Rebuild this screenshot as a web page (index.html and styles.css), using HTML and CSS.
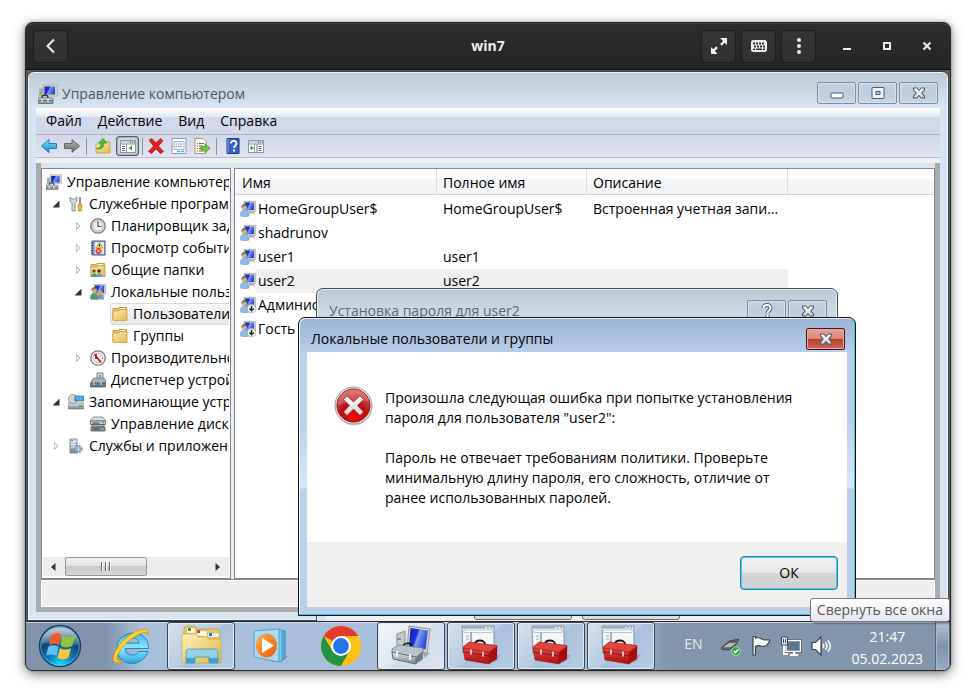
FILE: index.html
```html
<!DOCTYPE html>
<html lang="ru">
<head>
<meta charset="utf-8">
<title>win7</title>
<link rel="stylesheet" href="styles.css">
</head>
<body>
<svg class="defs" aria-hidden="true">
  <defs>
    <linearGradient id="g-screen" x1="0" y1="0" x2="1" y2="0.4"><stop offset="0" stop-color="#0a1eb4"/><stop offset="0.45" stop-color="#1a34d8"/><stop offset="0.55" stop-color="#7f9cf0"/><stop offset="1" stop-color="#2a48d8"/></linearGradient>
    <linearGradient id="g-folder" x1="0" y1="0" x2="1" y2="1"><stop offset="0" stop-color="#fdf0b4"/><stop offset="1" stop-color="#e3b54c"/></linearGradient>
    <linearGradient id="g-metal" x1="0" y1="0" x2="0" y2="1"><stop offset="0" stop-color="#e4e8ea"/><stop offset="1" stop-color="#78858c"/></linearGradient>
    <linearGradient id="g-blue" x1="0" y1="0" x2="0" y2="1"><stop offset="0" stop-color="#8fdcfb"/><stop offset="1" stop-color="#1687cf"/></linearGradient>
    <linearGradient id="g-grey" x1="0" y1="0" x2="0" y2="1"><stop offset="0" stop-color="#b4b4b4"/><stop offset="1" stop-color="#6c6c6c"/></linearGradient>
    <linearGradient id="g-red" x1="0" y1="0" x2="0" y2="1"><stop offset="0" stop-color="#e2433f"/><stop offset="1" stop-color="#a90e0e"/></linearGradient>
    <linearGradient id="g-cross" x1="0" y1="0" x2="0" y2="1"><stop offset="0" stop-color="#ffffff"/><stop offset="1" stop-color="#d3d3d3"/></linearGradient>
    <radialGradient id="g-error" cx="0.5" cy="0.85" r="0.9"><stop offset="0" stop-color="#f00a0a"/><stop offset="0.45" stop-color="#b90f12"/><stop offset="1" stop-color="#d8756f"/></radialGradient>
    <radialGradient id="g-orb" cx="0.5" cy="1" r="0.9"><stop offset="0" stop-color="#20e6ff"/><stop offset="0.35" stop-color="#0c86c0"/><stop offset="0.7" stop-color="#0d4677"/><stop offset="1" stop-color="#4c7196"/></radialGradient>
    <linearGradient id="g-gloss" x1="0" y1="0" x2="0" y2="1"><stop offset="0" stop-color="#fff" stop-opacity="0.65"/><stop offset="1" stop-color="#fff" stop-opacity="0.12"/></linearGradient>
    <linearGradient id="g-ie" x1="0" y1="0" x2="0" y2="1"><stop offset="0" stop-color="#3cb4ee"/><stop offset="0.5" stop-color="#8ee9ff"/><stop offset="1" stop-color="#2aa5e6"/></linearGradient>
    <linearGradient id="g-orange" x1="0" y1="0" x2="1" y2="1"><stop offset="0" stop-color="#ffac4c"/><stop offset="1" stop-color="#ea5a0c"/></linearGradient>

    <symbol id="i-comp" viewBox="0 0 20 20"><path d="M1 5l4-1v8l-4 1z" fill="#a8aeb2"/><path d="M2 8h2v2H2z" fill="#46d628"/><path d="M5 1h14.500v11H6z" fill="#d7d7cc" stroke="#9c9c92" stroke-width=".6"/><path d="M6.500 2.500h10.500v8h-10.500z" fill="url(#g-screen)"/><path d="M4 14c0-4 6-4 6 0" fill="none" stroke="#333" stroke-width="1.300"/><path d="M0 14h15v5.500H0z" fill="url(#g-metal)" stroke="#55636a" stroke-width=".7"/><path d="M0 16.500h15" stroke="#55636a"/><path d="M4 15v3M10 15v3" stroke="#eee" stroke-width="1.300"/></symbol>
    <symbol id="i-user" viewBox="0 0 16 16"><path d="M4 .5h11.500v9.500L12 11 5 9z" fill="#cfd1c8" stroke="#9a9c94" stroke-width=".6"/><path d="M5 1.500h9v7.500H5z" fill="url(#g-screen)"/><path d="M9 10h4l2 2.500H9z" fill="#b5b9b6"/><path d="M0.500 15c-.5-5 2-6 4-6s5 1 4.500 6c-2 .9-6 .9-8.500 0z" fill="#8dbde6" stroke="#6b9cc8" stroke-width=".6"/><circle cx="4.300" cy="6.500" r="2.600" fill="#d9b08d"/><path d="M1.600 7c-1-5 5-5 5.500-1.500C5 5 3 5 1.600 7z" fill="#8a6e55"/></symbol>
    <symbol id="i-off" viewBox="0 0 16 16"><use href="#i-user" width="16" height="16"/><circle cx="11.500" cy="11.500" r="4.300" fill="#f6f6f6" stroke="#888" stroke-width=".6"/><path d="M11.500 8.700v5M9.300 11.600l2.200 2.200 2.200-2.200" fill="none" stroke="#222" stroke-width="1.400"/></symbol>
    <symbol id="i-users" viewBox="0 0 16 16"><use href="#i-user" width="16" height="16"/><circle cx="10" cy="8.500" r="2.500" fill="#d9a15e"/><path d="M6 15.500c0-4 2-5 4-5s4 1 4 5z" fill="#7d97ae"/><path d="M.5 15c0-4 1-5.500 3.500-5.500S8 11 8 15z" fill="#4f9c57"/></symbol>
    <symbol id="i-tools" viewBox="0 0 16 16"><path d="M2 1v4l2 1.500V15h3V6.500L9 5V1L7 3H4z" fill="#d9dbdb" stroke="#717678" stroke-width=".8"/><path d="M12 1v7" stroke="#777" stroke-width="1.600"/><path d="M10.500 8h3l.5 2-.7 5h-2.600L10 10z" fill="#f4b52c" stroke="#b77a0c" stroke-width=".6"/></symbol>
    <symbol id="i-clock" viewBox="0 0 16 16"><circle cx="8" cy="8" r="7.200" fill="#e3ddd0" stroke="#77797c" stroke-width="1.300"/><circle cx="8" cy="8" r="5" fill="#eef5fa" stroke="#c6b488" stroke-width=".8"/><path d="M8 3.500V8.500h3.500" fill="none" stroke="#3a5374" stroke-width="1.200"/></symbol>
    <symbol id="i-event" viewBox="0 0 16 16"><path d="M2 1h13v14H2z" fill="#9eb3d2" stroke="#3c5384"/><path d="M5 2h9v12H5z" fill="#dde6f3"/><path d="M1 3h3M1 5.500h3M1 8h3M1 10.500h3M1 13h3" stroke="#555" stroke-width="1.200"/><path d="M9.500 2l3.500 6H6z" fill="#f6d32d" stroke="#a78a11" stroke-width=".5"/><path d="M9.500 4v2.500" stroke="#222"/><circle cx="8.500" cy="11" r="3" fill="#e03428"/><path d="M7 9.500l3 3m0-3l-3 3" stroke="#fff" stroke-width=".9"/></symbol>
    <symbol id="i-folder" viewBox="0 0 16 16"><path d="M1 2.500h5l1-1h7.500v12H1z" fill="#e7c161" stroke="#b98b2c" stroke-width=".8"/><path d="M1 5h6l1.500-1.500h6.500v11H1z" fill="url(#g-folder)" stroke="#c69a3c" stroke-width=".8"/><path d="M8 2.500h5" stroke="#fff"/></symbol>
    <symbol id="i-shared" viewBox="0 0 16 16"><use href="#i-folder" width="16" height="16"/><circle cx="4" cy="9" r="1.800" fill="#7b5136"/><circle cx="9" cy="9" r="1.800" fill="#3d3a33"/><path d="M1 15c0-5 6-5 6 0z" fill="#4aa370"/><path d="M6.500 15c0-5 6-5 6 0z" fill="#5fa8c5"/></symbol>
    <symbol id="i-perf" viewBox="0 0 16 16"><circle cx="8" cy="8" r="7.200" fill="#fafafa" stroke="#7a7d80" stroke-width="1.300"/><circle cx="8" cy="8" r="4.800" fill="#fff" stroke="#d46460" stroke-width="1" stroke-dasharray="1 1"/><path d="M4.500 4l6.500 8.500M6 4v5" stroke="#cf1c1c" stroke-width="1.800"/></symbol>
    <symbol id="i-device" viewBox="0 0 16 16"><path d="M7 1h6v7H7z" fill="#d5dcdc" stroke="#667577" stroke-width=".8"/><path d="M10 3v2" stroke="#1ba026" stroke-width="1.500"/><path d="M2 8l2-2h10l1.500 2v3H1z" fill="#a4b2ba" stroke="#596a72" stroke-width=".7"/><path d="M.5 11h15v4H.5z" fill="#667c88" stroke="#465761" stroke-width=".7"/><path d="M4 10v3M11 10v3" stroke="#e9eeee"/></symbol>
    <symbol id="i-storage" viewBox="0 0 16 16"><path d="M0 9h16v6H0z" fill="url(#g-metal)" stroke="#7a7f80" stroke-width=".7"/><circle cx="5" cy="5" r="4.500" fill="#d6dada" stroke="#80898b" stroke-width=".8"/><circle cx="5" cy="5" r="1.200" fill="#fff" stroke="#888" stroke-width=".6"/><path d="M7 2h8.500v5H7z" fill="#45b2e4" stroke="#1b6f9e" stroke-width=".7"/><path d="M11 12h3" stroke="#38b522" stroke-width="1.600"/></symbol>
    <symbol id="i-disk" viewBox="0 0 16 16"><path d="M3 1h10l2.500 4H.5z" fill="#dcdedd" stroke="#777c7c" stroke-width=".8"/><path d="M.5 5h15v3.500H.5zM2 8.500h12V11H2zM1 11h14v4H1z" fill="url(#g-metal)" stroke="#50595c" stroke-width=".8"/><path d="M2.500 7h7M3 13h7" stroke="#353b3d" stroke-width="1.200"/><path d="M12 6.500h2" stroke="#38b522" stroke-width="1.200"/></symbol>
    <symbol id="i-services" viewBox="0 0 16 16"><path d="M2 1h7v14H2z" fill="url(#g-metal)" stroke="#6c7980" stroke-width=".8"/><path d="M3 4h5M3 6.500h5M3 9h5" stroke="#eef" stroke-width="1"/><path d="M3 2.500h2" stroke="#35b72e" stroke-width="1.200"/><circle cx="10.500" cy="11" r="3" fill="#d2e4f1" stroke="#6691b4" stroke-width="2.200" stroke-dasharray="1.600 .8"/><circle cx="10.500" cy="11" r="1.200" fill="#fff" stroke="#47708f" stroke-width=".5"/></symbol>
    <symbol id="i-console" viewBox="0 0 16 16"><path d="M.5 2.500h15v12H.5z" fill="#fff" stroke="#8b93a0"/><path d="M1 3h14v2.500H1z" fill="#ccd5e2"/><path d="M10 4.200h1M12 4.200h1M14 4.200h.6" stroke="#46536a"/><path d="M1 6h14M6.500 6v8" stroke="#76818f" stroke-width=".8"/></symbol>
    <symbol id="i-x" viewBox="0 0 14 12"><path d="M1.500 1h3.200L7 3.500 9.300 1h3.200v1.800L9.800 6l2.700 3.200V11H9.300L7 8.500 4.700 11H1.500V9.200L4.200 6 1.500 2.800z" fill="url(#g-cross)" stroke="#4f566b" stroke-width="1.100" stroke-linejoin="round"/></symbol>
    <symbol id="i-toolbox" viewBox="0 0 40 40"><path d="M1 1h32v27H2z" fill="#f4f6f8" stroke="#8392a4"/><path d="M1.500 1.500h31v2h-31z" fill="#93a5b8"/><path d="M24 2.500h2M27.500 2.500h2M31 2.500h1" stroke="#fff"/><path d="M3 5h28v2.500H3z" fill="#fff" stroke="#8ea2ba" stroke-width=".6"/><path d="M10 7.500V18" stroke="#4a6790"/><path d="M5 11h3M5 14h3" stroke="#98a4b2"/><path d="M34 29l6 1-4 5-4 3z" fill="#788aa0" opacity=".5"/><path d="M14 19.500c0-5.500 10-5 10-.5" fill="none" stroke="#1b1010" stroke-width="1.800"/><path d="M2 22l6-5 28 3.500v6l-7 3L3 27z" fill="#e0453c" stroke="#a01414" stroke-width=".6"/><path d="M2 23l26 4v12L4 35z" fill="url(#g-red)" stroke="#8b1010" stroke-width=".5"/><path d="M28 27l8-6v13l-8 5z" fill="#a80f0f"/><path d="M2 27l26 4 8-5" fill="none" stroke="#7f0b0b" stroke-width=".8"/><path d="M10 24.500v5M22 26.500v5" stroke="#d8c0b8" stroke-width="2"/></symbol>
  </defs>
</svg>

<div class="viewer">
  <header class="viewer-bar">
    <button class="vbtn" aria-label="Назад"><svg width="16" height="16" viewBox="0 0 16 16"><path d="M11 1.500L4.500 8l6.500 6.500" fill="none" stroke="#eee" stroke-width="2"/></svg></button>
    <h1>win7</h1>
    <div class="viewer-tools">
      <button class="vbtn" aria-label="Во весь экран"><svg width="18" height="18" viewBox="0 0 18 18"><path d="M10 1h7v7l-2.300-2.300-3 3-1.600-1.600 3-3zM1 10l2.300 2.300 3-3 1.600 1.600-3 3L7.500 17H1z" fill="#eee"/></svg></button>
      <button class="vbtn" aria-label="Клавиатура"><svg width="18" height="14" viewBox="0 0 18 14"><rect x="1" y="1" width="16" height="12" rx="2.500" fill="#eee"/><path d="M3 4.500h12M4 7.500h11" stroke="#303030" stroke-width="1.800" stroke-dasharray="2 1"/><path d="M3 10.200h2m1 0h6m1 0h2" stroke="#303030" stroke-width="1.400"/></svg></button>
      <button class="vbtn" aria-label="Меню"><svg width="16" height="18" viewBox="0 0 16 18"><g fill="#eee"><circle cx="8" cy="3" r="2"/><circle cx="8" cy="9" r="2"/><circle cx="8" cy="15" r="2"/></g></svg></button>
      <div class="wm">
        <button aria-label="Свернуть"><svg width="16" height="16" viewBox="0 0 16 16"><path d="M4 11h8" stroke="#eee" stroke-width="2"/></svg></button>
        <button aria-label="Развернуть"><svg width="16" height="16" viewBox="0 0 16 16"><path d="M5 5h6v6H5z" fill="none" stroke="#eee" stroke-width="2"/></svg></button>
        <button aria-label="Закрыть"><svg width="16" height="16" viewBox="0 0 16 16"><path d="M4.500 4.500l7 7m0-7l-7 7" stroke="#eee" stroke-width="2"/></svg></button>
      </div>
    </div>
  </header>

  <main class="desktop">
    <section class="mgmt">
      <div class="titlebar">
        <svg class="i20"><use href="#i-comp"/></svg>
        <h2>Управление компьютером</h2>
        <div class="caption">
          <button aria-label="Свернуть окно"><svg width="14" height="12" viewBox="0 0 14 12"><rect x="1" y="6" width="12" height="5" rx="1" fill="#fff" stroke="#4f566b"/></svg></button>
          <button aria-label="Развернуть окно"><svg width="14" height="12" viewBox="0 0 14 12"><rect x="1" y=".5" width="12" height="11" rx="1" fill="#f4f4f4" stroke="#4f566b"/><rect x="5" y="4.500" width="4" height="3" fill="#b5c8dd" stroke="#4f566b"/></svg></button>
          <button aria-label="Закрыть окно"><svg width="14" height="12"><use href="#i-x"/></svg></button>
        </div>
      </div>
      <div class="client">
        <nav class="menubar"><button>Файл</button><button>Действие</button><button>Вид</button><button>Справка</button></nav>
        <div class="toolbar">
          <button aria-label="Назад"><svg class="i16" viewBox="0 0 16 16"><path d="M8 1.500v4h7.500v5H8v4L.5 8z" fill="url(#g-blue)" stroke="#1c6fb0" stroke-width=".9"/></svg></button>
          <button aria-label="Вперёд"><svg class="i16" viewBox="0 0 16 16"><path d="M8 1.500v4H.5v5H8v4L15.500 8z" fill="url(#g-grey)" stroke="#5e5e5e" stroke-width=".9"/></svg></button>
          <i class="sep"></i>
          <button aria-label="Вверх"><svg class="i16" viewBox="0 0 16 16"><path d="M1 6h6l2-2h6v11H1z" fill="url(#g-folder)" stroke="#c69a3c" stroke-width=".8"/><path d="M2 10c4 0 4-2 4-5H3.500L8 .5 12 5H9c0 4-2 6-7 6z" fill="#4ec22e" stroke="#27841a" stroke-width=".6"/></svg></button>
          <button class="pressed" aria-label="Дерево консоли"><svg class="i16" viewBox="0 0 16 16"><use href="#i-console"/><path d="M2 8.500h3M2 10.500h3M2 12.500h3" stroke="#3e68a8"/><path d="M12 7.500v5L8.500 10z" fill="#2fa82a"/></svg></button>
          <i class="sep"></i>
          <button aria-label="Удалить"><svg class="i16" viewBox="0 0 16 16"><path d="M1 2l3-1.500L8 5l4.500-4.500L15 2.500 10.500 8l5 5.500-3 2L8 11l-4.500 4.500L.5 13.500 5.500 8z" fill="#e3221f" stroke="#a50d0d" stroke-width=".7"/></svg></button>
          <button aria-label="Свойства"><svg class="i16" viewBox="0 0 16 16"><path d="M1 .5h14v15H1z" fill="#fff" stroke="#8c98ab"/><path d="M3 3.500h10v8H3z" fill="#f2f6fa" stroke="#8da3be" stroke-width=".8"/><path d="M4.500 6h1.500M7 6h4M4.500 8.500h1.500M7 8.500h4" stroke="#8296b0" stroke-width=".8"/><path d="M6 13.500h3M10 13.500h3" stroke="#34b6e8" stroke-width="1.500"/></svg></button>
          <button aria-label="Экспорт списка"><svg class="i16" viewBox="0 0 16 16"><path d="M1 .5h8l3 3v12H1z" fill="#fffbe6" stroke="#a49c78"/><path d="M3 5.500h1M5 5.500h5M3 8h1M5 8h4M3 10.500h1M5 10.500h2M3 13h1M5 13h5" stroke="#5b6b8c"/><path d="M7 8.500h4V6l5 4.200-5 4.300V12H7z" fill="#6ccd38" stroke="#36921a" stroke-width=".7"/></svg></button>
          <i class="sep"></i>
          <button aria-label="Справка"><svg class="i16" viewBox="0 0 16 16"><path d="M2 .5h12v15H2z" fill="#3a5fc4" stroke="#1c3585"/><path d="M3 1v14" stroke="#8ea8ea"/><path d="M6 5.500c0-3.500 5.500-3.500 5.500 0 0 2-2.500 2.200-2.500 4.500M9 11.500v2" fill="none" stroke="#fff" stroke-width="1.800"/></svg></button>
          <button aria-label="Панель действий"><svg class="i16" viewBox="0 0 16 16"><use href="#i-console"/><path d="M2.500 7.500v5L6 10z" fill="#2fa82a"/><path d="M9 6v8" stroke="#76818f"/><path d="M10.500 8.500h3M10.500 10.500h3M10.500 12.500h3" stroke="#3e68a8"/></svg></button>
        </div>
        <div class="frame">
          <div class="panes">
            <div class="tree">
              <ul>
                <li class="d0"><svg class="i16"><use href="#i-comp"/></svg>Управление компьютером</li>
                <li class="d1"><i class="tw open"></i><svg class="i16"><use href="#i-tools"/></svg>Служебные программы</li>
                <li class="d2"><i class="tw"></i><svg class="i16"><use href="#i-clock"/></svg>Планировщик заданий</li>
                <li class="d2"><i class="tw"></i><svg class="i16"><use href="#i-event"/></svg>Просмотр событий</li>
                <li class="d2"><i class="tw"></i><svg class="i16"><use href="#i-shared"/></svg>Общие папки</li>
                <li class="d2"><i class="tw open"></i><svg class="i16"><use href="#i-users"/></svg>Локальные пользователи</li>
                <li class="d3 sel"><svg class="i16"><use href="#i-folder"/></svg>Пользователи</li>
                <li class="d3"><svg class="i16"><use href="#i-folder"/></svg>Группы</li>
                <li class="d2"><i class="tw"></i><svg class="i16"><use href="#i-perf"/></svg>Производительность</li>
                <li class="d2"><i class="tw none"></i><svg class="i16"><use href="#i-device"/></svg>Диспетчер устройств</li>
                <li class="d1"><i class="tw open"></i><svg class="i16"><use href="#i-storage"/></svg>Запоминающие устройства</li>
                <li class="d2"><i class="tw none"></i><svg class="i16"><use href="#i-disk"/></svg>Управление дисками</li>
                <li class="d1"><i class="tw"></i><svg class="i16"><use href="#i-services"/></svg>Службы и приложения</li>
              </ul>
              <div class="hscroll">
                <svg width="6" height="10" viewBox="0 0 6 10"><path d="M5.500 1v8L1 5z" fill="#333"/></svg>
                <span class="thumb"><i></i><i></i><i></i></span>
                <svg width="6" height="10" viewBox="0 0 6 10"><path d="M.5 1v8L5 5z" fill="#333"/></svg>
              </div>
            </div>
            <div class="list">
              <table>
                <colgroup><col class="c1"><col class="c2"><col class="c3"><col></colgroup>
                <thead><tr><th>Имя</th><th>Полное имя</th><th>Описание</th><th class="rest"></th></tr></thead>
                <tbody>
                  <tr><td><span><svg class="i16"><use href="#i-user"/></svg>HomeGroupUser$</span></td><td>HomeGroupUser$</td><td>Встроенная учетная запи...</td><td></td></tr>
                  <tr><td><span><svg class="i16"><use href="#i-user"/></svg>shadrunov</span></td><td></td><td></td><td></td></tr>
                  <tr><td><span><svg class="i16"><use href="#i-user"/></svg>user1</span></td><td>user1</td><td></td><td></td></tr>
                  <tr class="sel"><td><span><svg class="i16"><use href="#i-user"/></svg>user2</span></td><td>user2</td><td></td><td></td></tr>
                  <tr><td><span><svg class="i16"><use href="#i-off"/></svg>Администратор</span></td><td></td><td></td><td></td></tr>
                  <tr><td><span><svg class="i16"><use href="#i-off"/></svg>Гость</span></td><td></td><td></td><td></td></tr>
                </tbody>
              </table>
            </div>
          </div>
          <div class="status"></div>
        </div>
      </div>
    </section>

    <section class="pw">
      <div class="titlebar">
        <h2>Установка пароля для user2</h2>
        <div class="caption">
          <button aria-label="Справка по окну"><svg width="14" height="16" viewBox="0 0 14 16"><path d="M3.500 5c0-4 7-4 7 0 0 2.500-3 2.500-3 5.500M7.500 12v2.500" fill="none" stroke="#4f566b" stroke-width="4"/><path d="M3.500 5c0-4 7-4 7 0 0 2.500-3 2.500-3 5.500M7.500 12v2.500" fill="none" stroke="#fff" stroke-width="2"/></svg></button>
          <button aria-label="Закрыть ввод пароля"><svg width="14" height="12"><use href="#i-x"/></svg></button>
        </div>
      </div>
      <div class="pw-body"><button aria-label="ОК"></button><button aria-label="Отмена"></button></div>
    </section>

    <section class="alert" role="alertdialog" aria-labelledby="alert-title">
      <div class="titlebar">
        <h2 id="alert-title">Локальные пользователи и группы</h2>
        <div class="caption"><button class="close" aria-label="Закрыть сообщение"><svg width="14" height="12"><use href="#i-x"/></svg></button></div>
      </div>
      <div class="alert-client">
        <div class="message">
          <svg class="err" width="40" height="40" viewBox="0 0 40 40"><ellipse cx="20" cy="22" rx="18" ry="17.500" fill="#999" opacity=".45"/><circle cx="19.500" cy="19.500" r="18.500" fill="#e9e9e9" stroke="#9a9a9a"/><circle cx="19.500" cy="19.500" r="16.500" fill="url(#g-error)" stroke="#8e1010"/><path d="M3.500 20C3 8 12 3 19.500 3S35 8 35.500 15C27 15 14 15 3.500 20z" fill="#fff" opacity=".16"/><path d="M13 10l6.500 6 6.500-6 3.500 3.500-6 6 6 6.500-3.500 3.500-6.500-6.500-6.500 6.500L9.500 26l6-6.500-6-6z" fill="url(#g-cross)" stroke="#9b1c1c" stroke-width=".6"/></svg>
          <div class="text">
            <p>Произошла следующая ошибка при попытке установления<br>пароля для пользователя "user2":</p>
            <p>Пароль не отвечает требованиям политики. Проверьте<br>минимальную длину пароля, его сложность, отличие от<br>ранее использованных паролей.</p>
          </div>
        </div>
        <div class="actions"><button class="ok">ОК</button></div>
      </div>
    </section>

    <footer class="taskbar">
      <button class="start" aria-label="Пуск"><svg width="44" height="44" viewBox="0 0 44 44"><circle cx="22" cy="22" r="20.500" fill="url(#g-orb)" stroke="#123f66" stroke-width="1.500"/><circle cx="22" cy="22" r="19.300" fill="none" stroke="#9fd4ef" stroke-opacity=".55"/><path d="M3.500 20C4 9 13 3.500 22 3.500S40 9 40.500 20C30 26 14 15 3.500 20z" fill="url(#g-gloss)"/><path d="M13.500 11.500c3-3 6-3 9.500-1L21 21c-3-2-6.500-2-10 0z" fill="#ef5c26"/><path d="M24.500 11.500c3 2 7.500 2.200 13 .5l-3.500 10c-4 2-8 2-11.500-.5z" fill="#8cc63e"/><path d="M10.500 22.500c3-1.800 7-1.600 10 .3L18.500 32c-3-2-6.500-2-10.500-.5z" fill="#62bdf2"/><path d="M22 24c3 2 7 2 11 .3L30.500 33.500c-3.500 2.500-8 2.500-11 .3z" fill="#fcc63c"/></svg></button>
      <button class="task plain" aria-label="Internet Explorer"><svg width="40" height="40" viewBox="0 0 40 40"><path d="M37.500 22.500H14c.3 7 11 9 13.500 3H37C32 42 6 42 6 22 6 3 38 1 37.500 22.500zM14.500 17H28c-.5-7-12.500-7-13.500 0z" fill="url(#g-ie)" stroke="#1d7bbd" stroke-width=".9" fill-rule="evenodd"/><path d="M37 9c3-10-12-6-22 3C5 21-1 33 4 36c2 1.300 5 .5 9-2-4 1-7 1-7-2 0-4 6-13 13-18C26 8.500 37 3 37 9z" fill="#fcd12c" stroke="#cf8d07" stroke-width=".7"/></svg></button>
      <button class="task open" aria-label="Проводник"><svg width="42" height="40" viewBox="0 0 42 40"><path d="M4 3l2-2h9l2 3h21l2 3v28H4z" fill="#e8ca62" stroke="#bd9a36" stroke-width=".7"/><path d="M7 3h8v5H7zM17 6h10v5H17zM28 8h11v4H28z" fill="#fff" stroke="#c3a54d" stroke-width=".4"/><path d="M8 3h3v3H8z" fill="#24a34a"/><path d="M17 5h3v3h-3z" fill="#df3a2d"/><path d="M29 8h3v3h-3z" fill="#2f76d8"/><path d="M2 9h14l2 3h8l2 2h13v24H2z" fill="url(#g-folder)" stroke="#cda644" stroke-width=".7"/><path d="M10 12v22M4 18l13 10M2 24h18M4 31l13-11" stroke="#fff" stroke-opacity=".35"/><path d="M6 38V27c0-2 1-3 3-3h26c2 0 3 1 3 3v11h-9v-6H15v6z" fill="#8bd3ee" stroke="#3b8fbe" stroke-width=".8" fill-opacity=".9"/><path d="M6 38v-5h9v5zM29 38v-5h9v5z" fill="#3f9fd6"/></svg></button>
      <button class="task plain" aria-label="Проигрыватель"><svg width="38" height="38" viewBox="0 0 38 38"><path d="M30 30l7-1-8 6-6-1z" fill="#6d8099" opacity=".5"/><path d="M22 3l11 1v27l-7 4z" fill="#59aedb" stroke="#3c8dbd"/><path d="M20 3h10v31H20z" fill="#83cbeb" stroke="#4797c5"/><path d="M2 4l25-2v33L2 30z" fill="#a8dcf2" stroke="#539fcb"/><ellipse cx="14.500" cy="18.500" rx="10.500" ry="12" fill="url(#g-orange)"/><path d="M10 11v15l12-7.500z" fill="#fff"/></svg></button>
      <button class="task plain" aria-label="Chrome"><svg width="40" height="40" viewBox="0 0 40 40"><circle cx="20" cy="20" r="20" fill="#fbc116"/><path d="M20 20L2.700 10A20 20 0 0 1 37.300 10H20z" fill="#e33b2e"/><path d="M2.700 10L11.300 25 20 30 20 40A20 20 0 0 1 2.700 10z" fill="#229342"/><path d="M20 40l8.700-15L20 20l-8.700 5z" fill="#229342"/><path d="M20 10h17.300A20 20 0 0 1 20 40l8.700-15z" fill="#fbc116"/><circle cx="20" cy="20" r="10" fill="#fff"/><circle cx="20" cy="20" r="7.900" fill="#2277e6"/></svg></button>
      <button class="task open active" aria-label="Управление компьютером"><svg width="42" height="40" viewBox="0 0 42 40"><path d="M7 9l8-3v20l-8-1z" fill="#c8c8c0" stroke="#8f8f88"/><path d="M7 14h4" stroke="#555"/><path d="M19 1l21 3-3 24-20-3z" fill="#d8dacd" stroke="#96988c"/><path d="M20.500 3l17.500 2.500-2.500 19-16.500-2z" fill="url(#g-screen)"/><path d="M32 26l8 2-5 5z" fill="#a8aaa0"/><path d="M13 23c0-6 8-6 9-1" fill="none" stroke="#222" stroke-width="2"/><path d="M2 24l7-4 24 3v5l-7 4-24-4z" fill="#b9c4ca" stroke="#6c7b84" stroke-width=".7"/><path d="M2 27l24 5v7L3 34z" fill="url(#g-metal)" stroke="#5f7079"/><path d="M26 32l7-6v8l-7 5z" fill="#6b7d87"/><path d="M7 26v6M20 29v6" stroke="#eef2f3" stroke-width="2"/></svg></button>
      <button class="task open" aria-label="Консоль 1"><svg width="40" height="40"><use href="#i-toolbox"/></svg></button>
      <button class="task open" aria-label="Консоль 2"><svg width="40" height="40"><use href="#i-toolbox"/></svg></button>
      <button class="task open" aria-label="Консоль 3"><svg width="40" height="40"><use href="#i-toolbox"/></svg></button>
      <div class="tray">
        <span class="lang">EN</span>
        <svg width="22" height="22" viewBox="0 0 22 22"><path d="M1 13l8-7 10-2-3 6-7 5-7-.5z" fill="#5d6266" stroke="#30353a" stroke-width=".7"/><path d="M3 12.500l6-4.500h7l-5 4z" fill="#b9bcbe"/><circle cx="16" cy="16" r="4.300" fill="#29ab2c" stroke="#e8f5e6" stroke-width=".6"/><path d="M13.800 16l1.700 1.800 2.800-3.500" fill="none" stroke="#fff" stroke-width="1.400"/></svg>
        <svg width="22" height="22" viewBox="0 0 22 22"><path d="M3 1.500h2.500V3c4-2 7 2.500 9 2 2 0 3-.5 5.500 0-1.500 3-1.500 6-6.500 6.500-3-.5-5-2-8 0v8.500H3z" fill="#fff" stroke="#3b4450" stroke-width="1.200"/></svg>
        <svg width="22" height="22" viewBox="0 0 22 22"><path d="M6 5.500h14.500v11H6z" fill="#69809d" stroke="#3b4450" stroke-width="3"/><path d="M6 5.500h14.500v11H6z" fill="#5f7590" stroke="#fff" stroke-width="1.500"/><path d="M10 20h8M14 17v3M4 10v9h4" stroke="#fff" stroke-width="2" fill="none"/><path d="M1.500 2h6v8h-6z" fill="#e8ecef" stroke="#3b4450"/><path d="M3.500 4v4M5.500 4v4" stroke="#3b4450"/></svg>
        <svg width="22" height="22" viewBox="0 0 22 22"><path d="M2 7.500h3.500L11 2v18l-5.500-5.500H2z" fill="#fff" stroke="#3b4450" stroke-width="1.200"/><path d="M13 9q1.500 2 0 4M15.500 7.500q3 3.500 0 7M18 5.500q4.500 5.500 0 11" fill="none" stroke="#fff" stroke-width="1.500"/></svg>
        <time>21:47<br>05.02.2023</time>
        <button class="peek" aria-label="Свернуть все окна"></button>
      </div>
    </footer>
    <div class="tip" role="tooltip">Свернуть все окна</div>
  </main>
</div>
</body>
</html>
```
FILE: styles.css
```css
* { box-sizing: border-box; }

body {
  margin: 0;
  min-height: 100vh;
  display: flex;
  padding: 22px 25px 28px;
  background: #fff;
  color: #000;
  font: 14px/20px "Open Sans", "Noto Sans", sans-serif;
}

button { font: inherit; color: inherit; padding: 0; border: 0; background: none; }
h1, h2, p, ul { margin: 0; padding: 0; }
h2 { font-size: 14px; font-weight: 400; white-space: nowrap; }
svg { display: block; flex: none; }
.defs { position: absolute; width: 0; height: 0; }
.i16 { width: 16px; height: 16px; }
.i20 { width: 20px; height: 20px; }

/* Remote viewer shell */
.viewer {
  flex: 1;
  min-width: 0;
  display: flex;
  flex-direction: column;
  border: 1px solid #2b2b2b;
  border-radius: 8px;
  background: #2b2b2b;
  box-shadow: 0 3px 12px rgba(0, 0, 0, .5), 0 0 3px rgba(0, 0, 0, .3);
}
.viewer-bar {
  height: 47px;
  display: grid;
  grid-template-columns: 1fr auto 1fr;
  align-items: center;
  padding: 0 7px;
  border-bottom: 1px solid #0c0c0c;
  border-radius: 8px 8px 0 0;
  background: linear-gradient(#2d2d2d, #252525);
  box-shadow: inset 0 1px #3c3c3c;
}
.viewer-bar h1 { color: #eee; font-size: 14px; font-weight: 700; }
.viewer-tools { display: flex; justify-content: flex-end; gap: 5px; }
.vbtn {
  width: 35px;
  height: 33px;
  display: grid;
  place-items: center;
  border: 1px solid #1c1c1c;
  border-radius: 5px;
  background: linear-gradient(#353535, #303030);
}
.wm { display: flex; gap: 16px; margin-left: 14px; padding-right: 4px; }
.wm button { width: 24px; display: grid; place-items: center; }

.desktop {
  position: relative;
  flex: 1;
  min-height: 0;
  display: flex;
  flex-direction: column;
  overflow: hidden;
  border-radius: 0 0 7px 7px;
  background: #595d60;
}

/* Window parts */
.titlebar { display: flex; align-items: center; }
.titlebar h2 { flex: 1; }
.caption { display: flex; gap: 2px; }
.caption button {
  width: 39px;
  height: 22px;
  display: grid;
  place-items: center;
  border: 1px solid #7e8ba5;
  border-radius: 2px;
  background: linear-gradient(#c5d4e4, #bccde0 50%, #c8d7e8);
  box-shadow: inset 0 0 0 1px #d5e0ec;
}

/* Computer management */
.mgmt {
  flex: 1;
  min-height: 0;
  display: flex;
  flex-direction: column;
  margin: 1px 1px 0;
  padding: 0 8px 8px;
  border: 1px solid #3f4448;
  border-radius: 7px 7px 0 0;
  background: linear-gradient(#bccad7, #d7e4f1 36px);
  box-shadow: inset 0 0 0 1px #eef5fb;
}
.mgmt .titlebar { height: 36px; padding: 7px 2px 0; gap: 4px; color: #4c5763; }
.mgmt .titlebar .caption { align-self: flex-start; margin-top: 3px; }
.client { flex: 1; min-height: 0; display: flex; flex-direction: column; background: #f0f0f0; }
.menubar {
  height: 27px;
  display: flex;
  gap: 16px;
  padding: 0 10px;
  border-bottom: 1px solid #b0b2bc;
  background: linear-gradient(#fff, #e3e9f4 9px, #d3d9ed 9px);
}
.toolbar {
  height: 23px;
  display: flex;
  align-items: center;
  gap: 3px;
  padding: 0 3px;
  border-bottom: 1px solid #b6bbd2;
  background: linear-gradient(#d2d6ea, #dfe4f2);
}
.toolbar button { width: 20px; height: 20px; display: grid; place-items: center; }
.toolbar .pressed { width: 23px; border: 1px solid #555c68; border-radius: 3px; background: #d4d8e2; box-shadow: inset 0 0 2px #444; }
.sep { width: 1px; height: 17px; margin: 0 3px 0 1px; background: #8d919f; }
.toolbar .pressed + .sep { margin: 0; }

.frame {
  flex: 1;
  min-height: 0;
  display: flex;
  flex-direction: column;
  margin-top: 5px;
  border: solid #a9abac;
  border-width: 0 5px 5px;
}
.panes { flex: 1; min-height: 0; display: flex; gap: 3px; padding-top: 5px; background: linear-gradient(#d7e4f1 5px, #eceef2 5px); }
.tree, .list { border: 1px solid #828790; background: #fff; overflow: hidden; }
.tree { width: 190px; display: flex; flex-direction: column; padding: 2px 1px 2px 0; }
.tree ul { flex: 1; min-height: 0; list-style: none; overflow: hidden; }
.tree li { height: 22px; display: flex; align-items: center; gap: 5px; white-space: nowrap; }
.d0 { padding-left: 4px; }
.d1 { padding-left: 7px; }
.d2 { padding-left: 29px; }
.tree .d3 { margin-left: 68px; padding-left: 2px; }
.tree .sel { border: 1px solid #d9d9d9; border-right: 0; border-radius: 3px 0 0 3px; background: linear-gradient(#fafafa, #e6e6e6); padding-left: 1px; }
.tw { flex: none; width: 14px; height: 10px; display: grid; place-items: center; }
.tw::before { content: ""; width: 5px; height: 9px; background: #a0a0a0; clip-path: polygon(0 0, 100% 50%, 0 100%, 0 0, 1px 2px, 1px 7px, 4px 50%, 1px 2px); }
.tw.open::before { width: 7px; height: 7px; background: #333; clip-path: polygon(100% 0, 100% 100%, 0 100%); }
.tw.none::before { content: none; }

.hscroll { height: 19px; display: flex; align-items: center; margin-left: 1px; padding: 0 8px 0 7px; background: #ececec; }
.hscroll svg:last-child { margin-left: auto; }
.thumb {
  width: 82px;
  height: 19px;
  display: flex;
  align-items: center;
  justify-content: center;
  gap: 2px;
  margin-left: 9px;
  border: 1px solid #979797;
  border-radius: 2px;
  background: linear-gradient(#f2f2f2, #e0e0e0 50%, #cacaca 50%, #d6d6d6);
}
.thumb i { width: 2px; height: 9px; background: linear-gradient(90deg, #666 1px, #fff 1px); }

.list { flex: 1; min-width: 0; }
table { width: 100%; table-layout: fixed; border-collapse: separate; border-spacing: 0; }
.c1 { width: 202px; }
.c2 { width: 150px; }
.c3 { width: 201px; }
th {
  height: 26px;
  padding: 3px 6px 0;
  text-align: left;
  font-weight: 400;
  border-right: 1px solid #dfdfdf;
  border-bottom: 1px solid #d5d5d5;
  background: linear-gradient(#fff 10px, #f5f6f8 10px, #f3f4f5);
}
th:first-child { padding-left: 7px; }
th.rest { border-right: 0; }
tbody::before { content: ""; display: table-row; height: 2px; }
td { height: 24px; padding: 0 6px; white-space: nowrap; }
td span { display: flex; align-items: center; gap: 2px; }
td:first-child { padding-left: 5px; }
.sel td { background: #f0f0f0; }
.sel td:first-child { background: linear-gradient(90deg, #fff 21px, #f0f0f0 21px); }
.sel td:last-child { background: none; }
.status { height: 28px; border-top: 1px solid #828790; background: #f0eded; box-shadow: inset 0 0 0 1px #fff; }

/* Password window, partly hidden behind the message */
.pw {
  position: absolute;
  left: 290px;
  top: 218px;
  width: 522px;
  height: 338px;
  display: flex;
  flex-direction: column;
  padding: 0 10px 0 9px;
  border: 1px solid #454a50;
  border-radius: 7px 7px 0 0;
  background: linear-gradient(#bccad7, #d7e4f1 40px);
  box-shadow: inset 0 0 0 1px #e8f0f7;
}
.pw .titlebar { height: 43px; padding-left: 3px; color: #5d6873; }
.pw-body { flex: 1; display: flex; align-items: flex-end; justify-content: flex-end; gap: 10px; padding: 0 147px 5px 0; background: #f0f0f0; }
.pw-body button { width: 98px; height: 24px; border: 1px solid #707070; border-radius: 3px; background: #ddd; }

/* Error message */
.alert {
  position: absolute;
  left: 272px;
  top: 247px;
  width: 558px;
  padding: 0 8px 8px;
  border: 1px solid #111;
  border-radius: 7px 7px 0 0;
  background: linear-gradient(#98b3d2, #b9d0ea 36px, #b9d0ea 100px, #dbe7f4 170px, #b9d0ea 171px);
  box-shadow: inset -1px -1px #35c8ec, inset 1px 1px #eef5fb;
}
.alert .titlebar { height: 34px; padding: 7px 2px 0 4px; }
.alert .close {
  border-color: #4b1119;
  background: linear-gradient(#e4a79c, #d98578 48%, #b83c28 50%, #d0695b);
  box-shadow: inset 0 0 0 1px #e8aaa2;
}
.alert-client { background: #fff; }
.message { display: flex; gap: 11px; padding: 36px 27px 34px; }
.err { margin-top: -2px; }
.text { display: grid; gap: 20px; white-space: nowrap; }
.actions { display: flex; justify-content: flex-end; padding: 14px 9px 17px; background: #f0f0f0; }
.ok {
  width: 98px;
  height: 34px;
  border: 1px solid #2f7fae;
  border-radius: 4px;
  background: linear-gradient(#f0f1f1, #e6e8e8 48%, #d3d6d7 50%, #cfd2d4);
  box-shadow: inset 0 0 0 1px #45cdf0;
}

/* Taskbar */
.taskbar {
  position: relative;
  height: 49px;
  display: flex;
  gap: 2px;
  border-top: 1px solid #1e2935;
  background: linear-gradient(90deg, #8093ab 80px, #a9c0dd 115px, #a9c0dd 600px, #8195ad 640px);
  box-shadow: inset 0 1px #cbd9e9;
}
.start, .task { display: grid; place-items: center; }
.start { width: 67px; margin-right: 2px; }
.task { width: 68px; }
.task svg { margin-top: -2px; }
.task.plain svg { margin-top: 0; }
.task.open {
  border: 1px solid #364353;
  border-radius: 3px;
  background: linear-gradient(135deg, #d5e0ed, #b7cbe3 50%, #a9c1dd 50%, #b8cce4);
  box-shadow: inset 0 0 0 1px #e3ebf4;
}
.task.active { background: linear-gradient(135deg, #f3f6fa, #dde6f0 50%, #cfdcea 50%, #dce5f0); }
.tray { flex: 1; display: flex; align-items: center; justify-content: flex-end; gap: 8px; color: #fff; }
.lang { margin-right: 9px; padding-bottom: 5px; color: #e6edf3; }
time { margin-left: 12px; padding-top: 3px; text-align: center; line-height: 22px; }
.peek { align-self: stretch; width: 15px; margin-left: 4px; border: 1px solid #55687d; border-width: 0 1px; background: linear-gradient(#b5c4d3, #7d92ab 50%, #9aacc0); box-shadow: inset 0 0 0 1px #a8b8c9; }
.tip {
  position: absolute;
  right: 0;
  bottom: 48px;
  padding: 1px 6px;
  border: 1px solid #767676;
  border-radius: 3px;
  background: linear-gradient(#fff, #e4e5f0);
  color: #575757;
  box-shadow: 2px 2px 2px rgba(0, 0, 0, .3);
  white-space: nowrap;
}
```
